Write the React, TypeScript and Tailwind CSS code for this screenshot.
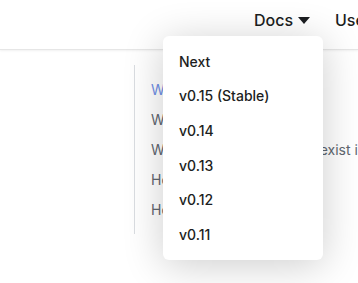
import React from "react";

const versions = ["Next", "v0.15 (Stable)", "v0.14", "v0.13", "v0.12", "v0.11"];

export default function App() {
  return (
    <div className="relative w-[358px] h-[283px] overflow-hidden bg-white" style={{ fontFamily: "Inter, 'Noto Sans', sans-serif" }}>
      <div className="h-[50px] border-b border-[#e6e6e6] shadow-[0_1px_2px_rgba(0,0,0,0.06)] flex items-center justify-end pl-4 whitespace-nowrap">
        <div className="flex items-center text-[16px] text-[#1c1e21] font-medium pb-[9px]">
          <span>Docs</span>
          <svg width="12" height="8" viewBox="0 0 12 8" className="ml-[5px] mt-[1px]">
            <path d="M0 0 L12 0 L6 7 Z" fill="#1c1e21" />
          </svg>
          <span className="ml-[25px] w-[23px] overflow-hidden">Users</span>
        </div>
      </div>
      <div className="flex pl-[134px] pt-[15px]">
        <div className="border-l border-[#dadde1] pl-4 pt-[14px] pb-[14px] h-[169px] text-[14px] text-[#606770] whitespace-nowrap flex flex-col gap-[9px]">
          <div className="text-[#6f8fe6] leading-[21px]">Why translations</div>
          <div className="leading-[21px]">What is a version</div>
          <div className="leading-[21px]">What if a version doesn't exist in</div>
          <div className="leading-[21px]">How to add</div>
          <div className="leading-[21px]">How to use</div>
        </div>
      </div>
      <div className="absolute left-[163px] top-[36px] w-[160px] rounded-[6px] bg-white shadow-[0_5px_40px_rgba(0,0,0,0.2)] py-[8px]">
        {versions.map((v) => (
          <div key={v} className="h-[34.6px] flex items-center pl-4 text-[14px] font-medium text-[#1c1e21]">
            {v}
          </div>
        ))}
      </div>
    </div>
  );
}
